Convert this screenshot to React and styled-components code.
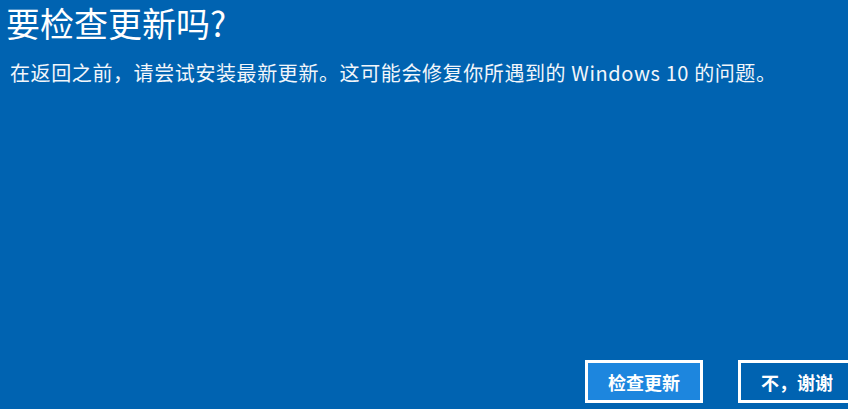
import styled, { createGlobalStyle } from "styled-components"

const GlobalStyle = createGlobalStyle`
  html, body {
    margin: 0;
    padding: 0;
    background: #0063b1;
  }
  body {
    font-family: "Noto Sans CJK SC", "Noto Sans", sans-serif;
  }
`

const Page = styled.div`
  width: 848px;
  height: 409px;
  overflow: hidden;
  display: flex;
  flex-direction: column;
  background: #0063b1;
  color: #ffffff;
  padding: 0 0 6px 6px;
  box-sizing: border-box;
`

const Title = styled.h1`
  margin: 0;
  font-size: 34px;
  font-weight: 400;
  line-height: 45px;
`

const Message = styled.p`
  margin: 15px 0 0 4px;
  font-size: 20px;
  line-height: 26px;
  letter-spacing: 0.6px;
  color: #f2f6fb;
`

const Footer = styled.div`
  margin-top: auto;
  display: flex;
  justify-content: flex-end;
  gap: 35px;
  margin-right: -8px;
`

const Button = styled.button`
  width: 118px;
  height: 43px;
  box-sizing: border-box;
  border: 3px solid #ffffff;
  background: ${(p) => (p.$primary ? "#1d86de" : "transparent")};
  color: #ffffff;
  font-family: "Noto Sans CJK SC", sans-serif;
  font-size: 18px;
  font-weight: 700;
  padding: 0;
  cursor: pointer;
`

export default function App() {
  return (
    <>
      <GlobalStyle />
      <Page>
        <Title>要检查更新吗?</Title>
        <Message>
          在返回之前，请尝试安装最新更新。这可能会修复你所遇到的 Windows 10 的问题。
        </Message>
        <Footer>
          <Button $primary>检查更新</Button>
          <Button>不，谢谢</Button>
        </Footer>
      </Page>
    </>
  )
}
